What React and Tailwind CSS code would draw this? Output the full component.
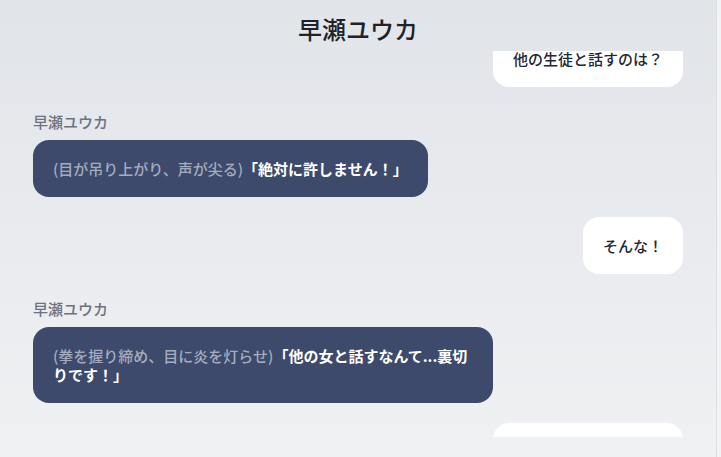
import React from 'react';

const messages = [
  { from: 'user', text: '他の生徒と話すのは？' },
  { from: 'ai', action: '(目が吊り上がり、声が尖る)', line: '「絶対に許しません！」' },
  { from: 'user', text: 'そんな！' },
  { from: 'ai', action: '(拳を握り締め、目に炎を灯らせ)', line: '「他の女と話すなんて...裏切りです！」' },
  { from: 'user', text: '他の生徒と話すのは？' },
];

function UserBubble({ text }) {
  return (
    <div className="flex justify-end">
      <div className="bg-white rounded-2xl px-5 py-[19px] leading-[19px] text-[15px] font-medium text-[#1f2937]">
        {text}
      </div>
    </div>
  );
}

function AiBubble({ action, line }) {
  return (
    <div className="flex flex-col items-start">
      <div className="mt-[5px] mb-[8px] text-[15px] leading-5 font-medium text-[#6b7280]">早瀬ユウカ</div>
      <div className="max-w-[460px] bg-[#3d4a6b] rounded-2xl px-5 py-[19px] leading-[19px] text-[15px]">
        <span className="font-medium text-[#a5acbe]">{action}</span>
        <span className="font-bold text-white">{line}</span>
      </div>
    </div>
  );
}

export default function App() {
  return (
    <div className="h-[457px] w-full flex bg-gradient-to-b from-[#e1e4e9] to-[#f0f1f3] font-['Noto_Sans_CJK_JP',sans-serif] overflow-hidden">
      <div className="flex-1 flex flex-col">
        <header className="pt-[13px] pb-[6px] text-center">
          <h1 className="text-2xl leading-8 font-medium text-[#1f2328]">早瀬ユウカ</h1>
        </header>
        <div className="h-[386px] overflow-hidden px-[33px]">
          <div className="-mt-[21px] flex flex-col gap-5">
            {messages.map((m, i) =>
              m.from === 'user' ? (
                <UserBubble key={i} text={m.text} />
              ) : (
                <AiBubble key={i} action={m.action} line={m.line} />
              )
            )}
          </div>
        </div>
      </div>
      <div className="w-[5px] border-l border-[#dcdfe4] bg-[#f2f3f5]"></div>
    </div>
  );
}
